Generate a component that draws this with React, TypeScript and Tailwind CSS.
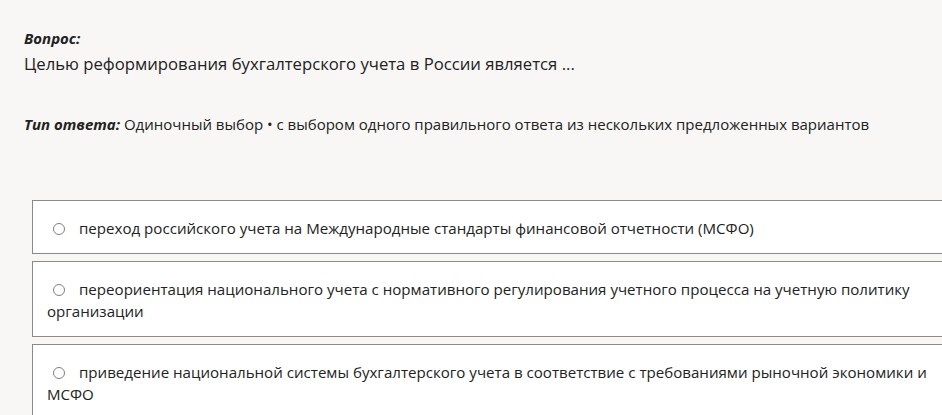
import React from 'react';

const options = [
  'переход российского учета на Международные стандарты финансовой отчетности (МСФО)',
  'переориентация национального учета с нормативного регулирования учетного процесса на учетную политику организации',
  'приведение национальной системы бухгалтерского учета в соответствие с требованиями рыночной экономики и МСФО',
];

const App: React.FC = () => {
  return (
    <div
      className="min-h-[415px] bg-[#f8f7f5] text-[#222] text-[15px] leading-[22px] pl-6 pt-[27px] overflow-hidden"
      style={{ fontFamily: '"Open Sans", "Noto Sans", sans-serif' }}
    >
      <div className="font-bold italic">Вопрос:</div>
      <div className="text-[16.7px] mt-[4px]">Целью реформирования бухгалтерского учета в России является ...</div>

      <div className="mt-[38px]">
        <span className="font-bold italic">Тип ответа:</span> Одиночный выбор • с выбором одного правильного ответа из нескольких предложенных вариантов
      </div>

      <div className="mt-[65px] ml-2 flex flex-col gap-[7px] -mr-4">
        {options.map((text) => (
          <div key={text} className="bg-white border border-[#8a8a8a] pl-[14px] pr-6 pt-[16px] pb-[14px] text-[15.1px]">
            <span className="inline-block align-[-1px] w-3 h-3 rounded-full border border-[#808080] ml-[6px] mr-[14px]" />
            {text}
          </div>
        ))}
      </div>
    </div>
  );
};

export default App;
